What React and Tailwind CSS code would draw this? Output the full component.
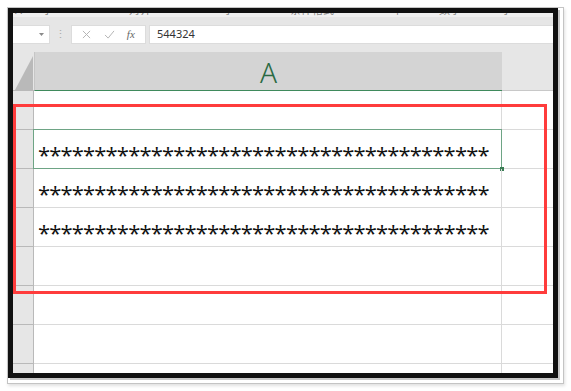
import React from 'react';

const STARS = '*'.repeat(40);

const Row = ({ text, selected }) => (
    <div className="flex h-[39px] shrink-0">
        {/* row header */}
        <div className="w-[21px] shrink-0 bg-[#e6e6e6] border-r border-b border-[#b9b9b9]" />
        {/* column A */}
        <div className="relative w-[468px] shrink-0 border-r border-b border-[#dadada] flex items-center pl-[4px]">
            {text && (
                <span className="text-[22px] leading-none text-[#111] tracking-[-0.85px] pt-[10px] whitespace-nowrap" style={{ fontFamily: '"Open Sans", sans-serif' }}>
                    {text}
                </span>
            )}
            {selected && (
                <>
                    <div className="absolute -top-px -left-px right-[-1px] bottom-[-1px] border border-[#6ea485]" />
                    <div className="absolute right-[-3px] bottom-[-3px] w-[4px] h-[4px] bg-[#3b7d55]" />
                </>
            )}
        </div>
        {/* column B */}
        <div className="flex-1 border-b border-[#dadada]" />
    </div>
);

const App = () => {
    return (
        <div className="w-[571px] h-[391px] bg-white pt-[7px] pl-[7px]" style={{ fontFamily: '"Noto Sans", "Noto Sans CJK SC", "Liberation Sans", sans-serif' }}>
            {/* outer frame */}
            <div className="w-[557px] h-[377px] border border-[#c4c4c4] shadow-[1px_2px_3px_rgba(0,0,0,0.12)]">
                <div className="w-[550px] h-[370px] border-[5px] border-[#111] bg-[#e6e6e6] shadow-[2px_2px_0_0_#c8c8c8] relative overflow-hidden flex flex-col">
                    {/* cut-off ribbon labels */}
                    <div className="h-[4px] shrink-0 bg-[#f0f0f0] overflow-hidden relative flex text-[11px] text-[#888] leading-[12px]">
                        <span className="mt-[-9px] ml-[2px]">A</span>
                        <span className="mt-[-9px] ml-[20px]">字</span>
                        <span className="mt-[-9px] ml-[76px]">对齐</span>
                        <span className="mt-[-9px] ml-[72px]">字</span>
                        <span className="mt-[-9px] ml-[56px]">条件格式</span>
                        <span className="mt-[-9px] ml-[58px]">单</span>
                        <span className="mt-[-9px] ml-[36px]">数字</span>
                        <span className="mt-[-9px] ml-[40px]">字</span>
                    </div>
                    <div className="h-[8px] shrink-0" />

                    {/* formula bar */}
                    <div className="h-[19px] shrink-0 flex items-stretch text-[#777]">
                        <div className="w-[37px] bg-white border border-l-0 border-[#dcdcdc] flex items-center justify-end pr-[5px]">
                            <svg width="5" height="3" viewBox="0 0 5 3"><polygon points="0,0 5,0 2.5,3" fill="#8a8a8a" /></svg>
                        </div>
                        <div className="w-[21px] flex items-center justify-center text-[#aaa] text-[11px]">⋮</div>
                        <div className="w-[75px] bg-white border border-[#dcdcdc] flex items-center justify-around px-[4px] text-[#bbb]">
                            <svg width="9" height="9" viewBox="0 0 10 10"><path d="M1 1L9 9M9 1L1 9" stroke="#b5b5b5" strokeWidth="1.1" /></svg>
                            <svg width="11" height="9" viewBox="0 0 12 10"><path d="M1 5.5L4.5 9L11 1" stroke="#b5b5b5" strokeWidth="1.1" fill="none" /></svg>
                            <span className="italic text-[11px] text-[#666]" style={{ fontFamily: '"Liberation Serif", serif' }}>fx</span>
                        </div>
                        <div className="w-[3px]" />
                        <div className="flex-1 bg-white border border-r-0 border-[#dcdcdc] flex items-center pl-[7px] text-[11px] text-[#333]">
                            544324
                        </div>
                    </div>
                    <div className="h-[8px] shrink-0" />

                    {/* column header */}
                    <div className="h-[39px] shrink-0 flex">
                        <div className="w-[21px] shrink-0 relative border-b border-[#b9b9b9]">
                            <svg className="absolute right-[1px] bottom-0" width="18" height="34" viewBox="0 0 18 34">
                                <polygon points="18,0 18,34 0,34" fill="#b9b9b9" />
                            </svg>
                        </div>
                        <div className="w-[468px] shrink-0 bg-[#d4d4d4] border-b border-[#3f8a5c] border-l border-l-[#c6c6c6] flex items-center justify-center">
                            <span className="text-[28px] leading-none text-[#2a6a43] font-light pt-[2px]">A</span>
                        </div>
                        <div className="flex-1 border-b border-[#c8c8c8]" />
                    </div>

                    {/* rows */}
                    <div className="flex-1 bg-white flex flex-col overflow-hidden">
                        <Row />
                        <Row text={STARS} selected />
                        <Row text={STARS} />
                        <Row text={STARS} />
                        <Row />
                        <Row />
                        <Row />
                        <Row />
                    </div>

                    {/* red highlight box */}
                    <div className="absolute left-0 top-[91px] w-[534px] h-[190px] border-[3px] border-[#ff3c3c]" />
                </div>
            </div>
        </div>
    );
};

export default App;
